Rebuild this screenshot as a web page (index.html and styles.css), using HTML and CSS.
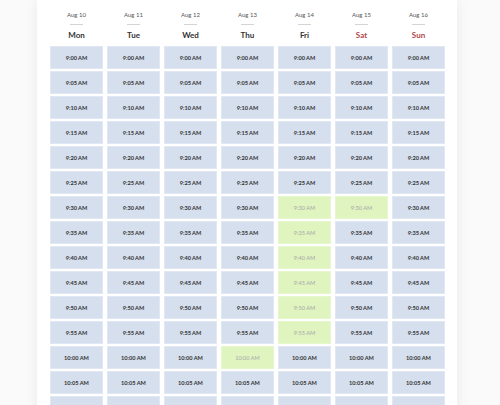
FILE: index.html
```html
<!DOCTYPE html>
<html>
<head>
<meta charset="utf-8">
<link rel="stylesheet" href="styles.css">
</head>
<body>
<div class="card">
  <div class="grid">
    <div class="col">
      <div class="head"><div class="date">Aug 10</div><div class="rule"></div><div class="day">Mon</div></div>
      <div class="slot">9:00 AM</div><div class="slot">9:05 AM</div><div class="slot">9:10 AM</div><div class="slot">9:15 AM</div><div class="slot">9:20 AM</div><div class="slot">9:25 AM</div><div class="slot">9:30 AM</div><div class="slot">9:35 AM</div><div class="slot">9:40 AM</div><div class="slot">9:45 AM</div><div class="slot">9:50 AM</div><div class="slot">9:55 AM</div><div class="slot">10:00 AM</div><div class="slot">10:05 AM</div><div class="slot">10:10 AM</div>
    </div>
    <div class="col">
      <div class="head"><div class="date">Aug 11</div><div class="rule"></div><div class="day">Tue</div></div>
      <div class="slot">9:00 AM</div><div class="slot">9:05 AM</div><div class="slot">9:10 AM</div><div class="slot">9:15 AM</div><div class="slot">9:20 AM</div><div class="slot">9:25 AM</div><div class="slot">9:30 AM</div><div class="slot">9:35 AM</div><div class="slot">9:40 AM</div><div class="slot">9:45 AM</div><div class="slot">9:50 AM</div><div class="slot">9:55 AM</div><div class="slot">10:00 AM</div><div class="slot">10:05 AM</div><div class="slot">10:10 AM</div>
    </div>
    <div class="col">
      <div class="head"><div class="date">Aug 12</div><div class="rule"></div><div class="day">Wed</div></div>
      <div class="slot">9:00 AM</div><div class="slot">9:05 AM</div><div class="slot">9:10 AM</div><div class="slot">9:15 AM</div><div class="slot">9:20 AM</div><div class="slot">9:25 AM</div><div class="slot">9:30 AM</div><div class="slot">9:35 AM</div><div class="slot">9:40 AM</div><div class="slot">9:45 AM</div><div class="slot">9:50 AM</div><div class="slot">9:55 AM</div><div class="slot">10:00 AM</div><div class="slot">10:05 AM</div><div class="slot">10:10 AM</div>
    </div>
    <div class="col">
      <div class="head"><div class="date">Aug 13</div><div class="rule"></div><div class="day">Thu</div></div>
      <div class="slot">9:00 AM</div><div class="slot">9:05 AM</div><div class="slot">9:10 AM</div><div class="slot">9:15 AM</div><div class="slot">9:20 AM</div><div class="slot">9:25 AM</div><div class="slot">9:30 AM</div><div class="slot">9:35 AM</div><div class="slot">9:40 AM</div><div class="slot">9:45 AM</div><div class="slot">9:50 AM</div><div class="slot">9:55 AM</div><div class="slot off">10:00 AM</div><div class="slot">10:05 AM</div><div class="slot">10:10 AM</div>
    </div>
    <div class="col">
      <div class="head"><div class="date">Aug 14</div><div class="rule"></div><div class="day">Fri</div></div>
      <div class="slot">9:00 AM</div><div class="slot">9:05 AM</div><div class="slot">9:10 AM</div><div class="slot">9:15 AM</div><div class="slot">9:20 AM</div><div class="slot">9:25 AM</div><div class="slot off">9:30 AM</div><div class="slot off">9:35 AM</div><div class="slot off">9:40 AM</div><div class="slot off">9:45 AM</div><div class="slot off">9:50 AM</div><div class="slot off">9:55 AM</div><div class="slot">10:00 AM</div><div class="slot">10:05 AM</div><div class="slot">10:10 AM</div>
    </div>
    <div class="col">
      <div class="head"><div class="date">Aug 15</div><div class="rule"></div><div class="day weekend">Sat</div></div>
      <div class="slot">9:00 AM</div><div class="slot">9:05 AM</div><div class="slot">9:10 AM</div><div class="slot">9:15 AM</div><div class="slot">9:20 AM</div><div class="slot">9:25 AM</div><div class="slot off">9:30 AM</div><div class="slot">9:35 AM</div><div class="slot">9:40 AM</div><div class="slot">9:45 AM</div><div class="slot">9:50 AM</div><div class="slot">9:55 AM</div><div class="slot">10:00 AM</div><div class="slot">10:05 AM</div><div class="slot">10:10 AM</div>
    </div>
    <div class="col">
      <div class="head"><div class="date">Aug 16</div><div class="rule"></div><div class="day weekend">Sun</div></div>
      <div class="slot">9:00 AM</div><div class="slot">9:05 AM</div><div class="slot">9:10 AM</div><div class="slot">9:15 AM</div><div class="slot">9:20 AM</div><div class="slot">9:25 AM</div><div class="slot">9:30 AM</div><div class="slot">9:35 AM</div><div class="slot">9:40 AM</div><div class="slot">9:45 AM</div><div class="slot">9:50 AM</div><div class="slot">9:55 AM</div><div class="slot">10:00 AM</div><div class="slot">10:05 AM</div><div class="slot">10:10 AM</div>
    </div>
  </div>
</div>
</body>
</html>
```
FILE: styles.css
```css
html, body {
  margin: 0;
  padding: 0;
  background: #fafafa;
  height: 405px;
  overflow: hidden;
  font-family: Lato, "Liberation Sans", sans-serif;
}
.card {
  width: 394px;
  margin-left: 37px;
  padding: 10px 13px 0 13px;
  background: #fff;
  box-shadow: 0 0 12px rgba(0,0,0,0.07);
  min-height: 420px;
}
.grid {
  display: grid;
  grid-template-columns: repeat(7, 53px);
  column-gap: 4px;
}
.col {
  display: flex;
  flex-direction: column;
  gap: 2px;
}
.head {
  display: flex;
  flex-direction: column;
  align-items: center;
  margin-bottom: 4px;
}
.date {
  font-size: 6px;
  line-height: 9px;
  color: #555;
}
.rule {
  width: 13px;
  height: 1px;
  background: #d4d4d4;
  margin-top: 5px;
}
.day {
  margin-top: 5px;
  font-size: 8px;
  line-height: 10px;
  font-weight: 700;
  color: #333;
}
.day.weekend {
  color: #b0474a;
}
.slot {
  height: 21px;
  border: 1px solid #e1e8f3;
  background: #d5dfee;
  display: flex;
  align-items: center;
  justify-content: center;
  font-size: 5.6px;
  font-weight: 700;
  color: #333;
}
.slot.off {
  background: #dff4bf;
  border-color: #e6f7cc;
  color: #a9a9a9;
  font-weight: 400;
}
```
